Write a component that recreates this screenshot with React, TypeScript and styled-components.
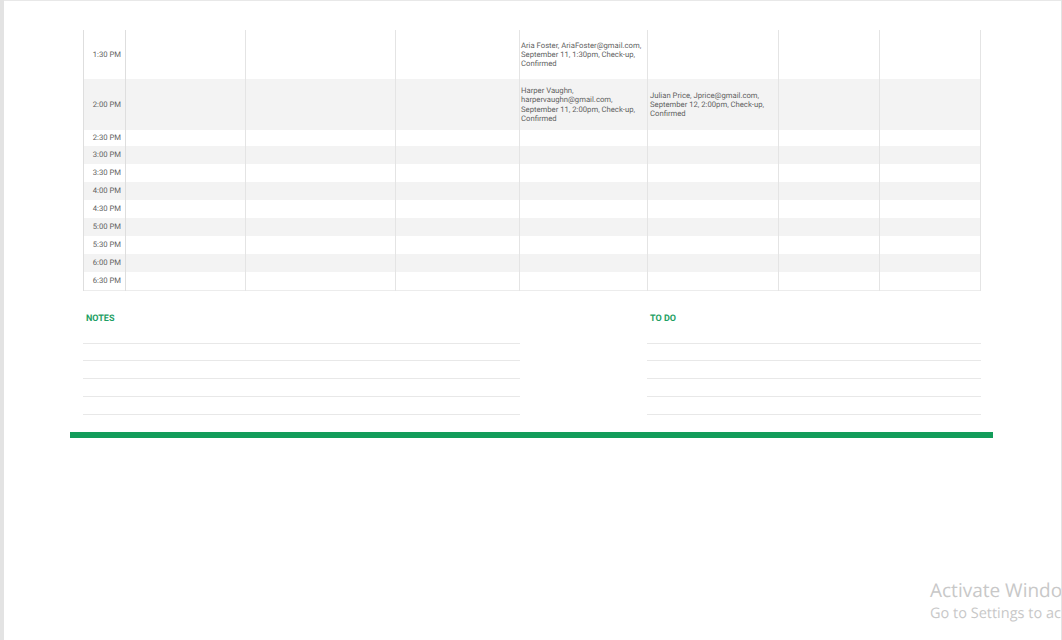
import * as React from 'react'
import styled, { createGlobalStyle } from 'styled-components'

const GlobalStyle = createGlobalStyle`
  html, body {
    margin: 0;
    padding: 0;
    background: #e3e3e3;
  }
`

const Screen = styled.div`
  width: 1062px;
  height: 640px;
  overflow: hidden;
  background: #e3e3e3;
  padding: 0 1px 0 4px;
  box-sizing: border-box;
  font-family: Roboto, "Liberation Sans", sans-serif;
  text-rendering: geometricPrecision;
`

const Sheet = styled.div`
  position: relative;
  overflow: hidden;
  height: 640px;
  box-sizing: border-box;
  background: #fff;
  border-top: 1px solid #e8e8e8;
  padding: 29px 68px 0 66px;
`

const Schedule = styled.table`
  width: 898px;
  margin-left: 13px;
  table-layout: fixed;
  border-collapse: collapse;
  border-bottom: 1px solid #ececec;
`

const Row = styled.tr<{ $shaded: boolean; $height: number }>`
  height: ${(p) => p.$height}px;
  background: ${(p) => (p.$shaded ? '#f3f3f3' : '#fff')};
`

const TimeCell = styled.td`
  width: 42px;
  box-sizing: border-box;
  padding: 0 4px 1px 0;
  text-align: right;
  font-size: 7.7px;
  color: #5f5f5f;
  border-left: 1px solid #dedede;
  border-right: 1px solid #dedede;
`

const SlotCell = styled.td<{ $width: number }>`
  width: ${(p) => p.$width}px;
  box-sizing: border-box;
  padding: 0 0 0 2px;
  font-size: 7.7px;
  line-height: 9.2px;
  color: #5f5f5f;
  white-space: nowrap;
  border-right: 1px solid #e4e4e4;

  &:nth-child(5) {
    padding-left: 1px;
  }
`

const Lists = styled.div`
  display: grid;
  grid-template-columns: 437px 334px;
  column-gap: 127px;
  margin: 21px 0 0 13px;
`

const ListTitle = styled.div`
  height: 31.2px;
  padding: 1px 0 0 3px;
  box-sizing: border-box;
  font-size: 9px;
  line-height: 12px;
  font-weight: 700;
  color: #1f9f64;
`

const ListLine = styled.div`
  height: 17.8px;
  box-sizing: border-box;
  border-top: 1px solid #e8e8e8;
`

const GreenBar = styled.div`
  width: 923px;
  height: 6px;
  background: #139c5a;
`

const Watermark = styled.div`
  position: absolute;
  left: 926px;
  top: 577px;
  white-space: nowrap;
  font-family: "Open Sans", sans-serif;
  color: #c8c8c8;
`

const WatermarkTitle = styled.div`
  font-size: 19px;
  line-height: 24px;
`

const WatermarkText = styled.div`
  font-size: 14.5px;
  line-height: 23px;
`

const widths = [120, 150, 124, 128, 131, 101, 101]

const rows: { time: string; height: number; cells?: Record<number, string[]> }[] = [
  { time: '1:30 PM', height: 49, cells: { 3: ['Aria Foster, AriaFoster@gmail.com,', 'September 11, 1:30pm, Check-up,', 'Confirmed'] } },
  {
    time: '2:00 PM',
    height: 51,
    cells: {
      3: ['Harper Vaughn,', 'harpervaughn@gmail.com,', 'September 11, 2:00pm, Check-up,', 'Confirmed'],
      4: ['Julian Price, Jprice@gmail.com,', 'September 12, 2:00pm, Check-up,', 'Confirmed'],
    },
  },
  { time: '2:30 PM', height: 16 },
  { time: '3:00 PM', height: 18 },
  { time: '3:30 PM', height: 18 },
  { time: '4:00 PM', height: 18 },
  { time: '4:30 PM', height: 18 },
  { time: '5:00 PM', height: 18 },
  { time: '5:30 PM', height: 18 },
  { time: '6:00 PM', height: 18 },
  { time: '6:30 PM', height: 18 },
]

const lists = ['NOTES', 'TO DO']

class App extends React.Component {
  render() {
    return (
      <Screen>
        <GlobalStyle />
        <Sheet>
          <Schedule>
            <tbody>
              {rows.map((row, i) => (
                <Row key={row.time} $shaded={i % 2 === 1} $height={row.height}>
                  <TimeCell>{row.time}</TimeCell>
                  {widths.map((w, c) => (
                    <SlotCell key={c} $width={w}>
                      {row.cells && row.cells[c] && row.cells[c].map((line) => <div key={line}>{line}</div>)}
                    </SlotCell>
                  ))}
                </Row>
              ))}
            </tbody>
          </Schedule>
          <Lists>
            {lists.map((title) => (
              <div key={title}>
                <ListTitle>{title}</ListTitle>
                {[0, 1, 2, 3, 4].map((n) => <ListLine key={n} />)}
              </div>
            ))}
          </Lists>
          <GreenBar />
          <Watermark>
            <WatermarkTitle>Activate Windows</WatermarkTitle>
            <WatermarkText>Go to Settings to activate Windows.</WatermarkText>
          </Watermark>
        </Sheet>
      </Screen>
    )
  }
}

export default App
